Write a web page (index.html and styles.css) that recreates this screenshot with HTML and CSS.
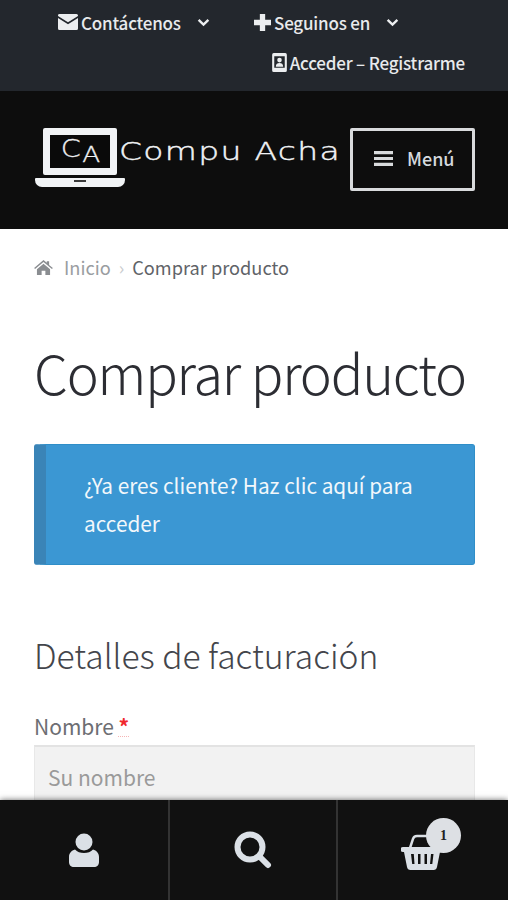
FILE: index.html
```html
<!DOCTYPE html>
<html lang="es">

<head>
  <meta charset="utf-8">
  <title>Comprar producto</title>
  <link rel="stylesheet" href="styles.css">
</head>

<body>
  <div class="topbar">
    <div class="topbar-row">
      <a class="top-link top-contact">
        <svg class="top-icon" viewBox="0 0 20 16"><path d="M1.500 0h17A1.500 1.500 0 0 1 20 1.500v.6l-10 6.200-10-6.200v-.6A1.500 1.500 0 0 1 1.500 0zM0 4l10 6.200L20 4v10.500a1.500 1.500 0 0 1-1.500 1.500h-17A1.500 1.500 0 0 1 0 14.500z"/></svg>
        Contáctenos
        <svg class="chev" viewBox="0 0 12 8"><path d="M1.500 1.500L6 6l4.500-4.500" /></svg>
      </a>
      <a class="top-link top-follow">
        <svg class="top-icon plus" viewBox="0 0 16 16"><path d="M5.500 0h5v5.500H16v5h-5.500V16h-5v-5.500H0v-5h5.500z"/></svg>
        Seguinos en
        <svg class="chev" viewBox="0 0 12 8"><path d="M1.500 1.500L6 6l4.500-4.500" /></svg>
      </a>
    </div>
    <div class="topbar-row topbar-right">
      <a class="top-link">
        <svg class="top-icon badge" viewBox="0 0 14 20"><path fill-rule="evenodd" d="M1.500 1h11A1.500 1.500 0 0 1 14 2.500v15a1.500 1.500 0 0 1-1.500 1.500h-11A1.500 1.500 0 0 1 0 17.500v-15A1.500 1.500 0 0 1 1.500 1zM2 4v11h10V4zM7 5.500a2.200 2.200 0 1 1 0 4.400 2.200 2.200 0 0 1 0-4.400zM3.500 14c0-2.500 1.500-3.500 3.500-3.500s3.500 1 3.500 3.500z"/></svg>
        Acceder – Registrarme
      </a>
    </div>
  </div>

  <header class="site-header">
    <div class="logo">
      <div class="laptop">
        <div class="laptop-screen"><span class="laptop-c">C</span><span class="laptop-a">A</span></div>
        <div class="laptop-base"><span class="laptop-notch"></span></div>
      </div>
      <span class="logo-text">Compu Acha</span>
    </div>
    <button class="menu-btn">
      <svg class="menu-icon" viewBox="0 0 18 14"><path d="M0 0h18v3H0zM0 5.500h18v3H0zM0 11h18v3H0z"/></svg>
      Menú
    </button>
  </header>

  <main class="content">
    <nav class="breadcrumb">
      <svg class="home-icon" viewBox="0 0 20 16"><path d="M10 0l3.500 3V1.200h2.500v4L20 8.500l-1 1.200L10 2.200 1 9.700 0 8.500zM10 4l7 5.800V16h-5v-4.500H8V16H3V9.800z"/></svg>
      <a class="crumb-link">Inicio</a>
      <span class="crumb-sep">›</span>
      <span>Comprar producto</span>
    </nav>

    <h1 class="page-title">Comprar producto</h1>

    <div class="notice">¿Ya eres cliente? Haz clic aquí para acceder</div>

    <h3 class="section-title">Detalles de facturación</h3>

    <label class="field-label">Nombre <abbr class="required">*</abbr></label>
    <input class="field-input" type="text" placeholder="Su nombre">
  </main>

  <footer class="bottom-bar">
    <a class="bottom-item">
      <svg class="user-icon" viewBox="0 0 30 34"><circle cx="15" cy="9" r="8.500"/><path d="M6 16.500c2 2.500 5.500 3.500 9 3.500s7-1 9-3.500c3.500 1 6 3.500 6 7.500v5c0 3-2 5-5 5H5c-3 0-5-2-5-5v-5c0-4 2.500-6.500 6-7.500z"/></svg>
    </a>
    <a class="bottom-item">
      <svg class="search-icon" viewBox="0 0 38 38"><circle cx="16" cy="16" r="12.500"/><path d="M25.500 25.500L34 34"/></svg>
    </a>
    <a class="bottom-item">
      <svg class="cart-icon" viewBox="0 0 42 38"><path class="cart-handle" d="M9 15l3-9c.5-2 2-3 4-3h10"/><path fill-rule="evenodd" d="M2 14h38a2 2 0 0 1 0 5h-1l-3 15c-.4 2-1.500 3-3.500 3h-23c-2 0-3.100-1-3.500-3L3 19H2a2 2 0 0 1 0-5zM10 21l1.200 10h2.300L12.800 21zM17 21v10h2.500V21zM23.500 21v10H26V21zM30 21l-1 10h2.300l1.200-10z"/></svg>
      <span class="cart-count">1</span>
    </a>
  </footer>
</body>

</html>
```

FILE: styles.css
```css
html, body {
  height: 100%;
}

body {
  margin: 0;
  height: 900px;
  overflow: hidden;
  font-family: "Noto Sans CJK JP", "Noto Sans", sans-serif;
  background: #fff;
  color: #43454b;
}

/* top bar */
.topbar {
  height: 91px;
  box-sizing: border-box;
  background: #23272d;
  padding-top: 2px;
  color: #e8eaec;
  font-size: 17px;
  font-weight: 500;
  letter-spacing: -0.2px;
}

.topbar-row {
  display: flex;
  height: 40px;
  align-items: center;
  padding-left: 58px;
}

.topbar-right {
  justify-content: flex-end;
  padding-right: 43px;
}

.top-link {
  display: flex;
  align-items: center;
  gap: 3px;
  white-space: nowrap;
}

.top-contact {
  width: 196px;
}

.top-icon {
  fill: #eceef0;
}

.top-contact .top-icon {
  width: 20px;
  height: 16px;
}

.plus {
  width: 17px;
  height: 17px;
}

.badge {
  width: 15px;
  height: 21px;
}

.chev {
  width: 13px;
  height: 9px;
  margin-left: 13px;
  fill: none;
  stroke: #eceef0;
  stroke-width: 2.200;
}

/* header */
.site-header {
  height: 138px;
  box-sizing: border-box;
  background: #0d0d0d;
  display: flex;
  align-items: center;
  justify-content: space-between;
  padding: 0 33px 0 34px;
}

.logo {
  display: flex;
  align-items: center;
  margin-top: -6px;
}

.laptop {
  width: 92px;
  display: flex;
  flex-direction: column;
  align-items: center;
}

.laptop-screen {
  width: 60px;
  height: 33px;
  border: 7px solid #f1f3f5;
  border-radius: 2px;
  background: #0a0a0a;
  display: flex;
  align-items: center;
  justify-content: center;
  color: #eef0f2;
  font-family: "DejaVu Sans", sans-serif;
  font-weight: 200;
  line-height: 1;
  overflow: hidden;
}

.laptop-c {
  font-size: 25px;
  margin-top: -5px;
  transform: scaleX(1.15);
  -webkit-text-stroke: 0.3px #eef0f2;
}

.laptop-a {
  margin: 9px 0 0 5px;
  font-size: 21px;
  transform: scaleX(1.25);
  -webkit-text-stroke: 0.3px #eef0f2;
}

.laptop-base {
  position: relative;
  width: 90px;
  height: 9px;
  margin-top: 3px;
  background: #f1f3f5;
  border-radius: 1px 1px 7px 7px;
}

.laptop-notch {
  position: absolute;
  top: 2px;
  left: 39px;
  width: 12px;
  height: 2px;
  background: #3a3a3a;
}

.logo-text {
  margin: -10px 0 0 -7px;
  color: #f1f3f5;
  font-family: "DejaVu Sans", sans-serif;
  font-size: 24px;
  font-weight: 200;
  letter-spacing: 1px;
  white-space: nowrap;
  -webkit-text-stroke: 0.4px #f1f3f5;
  transform: scaleX(1.37);
  transform-origin: left center;
}

.menu-btn {
  display: flex;
  align-items: center;
  gap: 14px;
  width: 125px;
  height: 63px;
  box-sizing: border-box;
  margin-top: -1px;
  padding: 0 0 3px 21px;
  background: transparent;
  border: 3px solid #d8dadc;
  border-radius: 2px;
  color: #d5d9de;
  font-family: inherit;
  font-size: 18px;
  font-weight: 500;
}

.menu-icon {
  width: 19px;
  height: 15px;
  fill: #d8dadc;
}

/* content */
.content {
  padding: 0 33px 0 34px;
}

.breadcrumb {
  display: flex;
  align-items: center;
  height: 28px;
  margin-top: 24px;
  font-size: 18.200px;
  color: #5f6368;
}

.home-icon {
  width: 19px;
  height: 15px;
  fill: #8a8d91;
  margin-right: 11px;
}

.crumb-link {
  color: #9a9da1;
}

.crumb-sep {
  margin: 0 8px;
  color: #c9cbcd;
}

.page-title {
  margin: 54px 0 0;
  font-size: 54px;
  font-weight: 300;
  line-height: 74px;
  letter-spacing: -1.200px;
  color: #2c2d33;
  white-space: nowrap;
}

.notice {
  margin-top: 35px;
  box-sizing: border-box;
  height: 121px;
  padding: 21px 40px 0 38px;
  background: #3b97d3;
  border: 1px solid #2f8ec8;
  border-left: 12px solid #3a84b7;
  border-radius: 3px;
  color: #f2f7fb;
  font-size: 20.800px;
  font-weight: 400;
  line-height: 38px;
}

.section-title {
  margin: 65px 0 0;
  font-size: 33.600px;
  font-weight: 300;
  line-height: 50px;
  color: #43454b;
}

.field-label {
  display: block;
  margin-top: 32px;
  font-size: 21px;
  line-height: 28px;
  color: #6d6e73;
}

.required {
  color: #f0282d;
  font-weight: 700;
  text-decoration: underline dotted;
  text-decoration-color: #f5b5b5;
  text-decoration-thickness: 1px;
}

.field-input {
  display: block;
  width: 100%;
  height: 70px;
  box-sizing: border-box;
  margin-top: 5px;
  padding: 0 13px 8px 13px;
  background: #f2f2f2;
  border: 0;
  border-top: 2px solid #e3e3e3;
  border-left: 1px solid #e8e8e8;
  border-right: 1px solid #e8e8e8;
  font-family: inherit;
  font-size: 21px;
  line-height: 28px;
}

.field-input::placeholder {
  color: #9a9a9a;
  opacity: 1;
}

/* bottom bar */
.bottom-bar {
  position: fixed;
  left: 0;
  right: 0;
  bottom: 0;
  height: 100px;
  background: #111;
  display: grid;
  grid-template-columns: 170px 168px 170px;
  box-shadow: 0 0 6px rgba(0, 0, 0, 0.6);
}

.bottom-item {
  position: relative;
  display: flex;
  align-items: center;
  justify-content: center;
  padding-bottom: 1px;
  border-right: 2px solid #333;
}

.bottom-item:last-child {
  border-right: 0;
}

.user-icon {
  width: 30px;
  height: 34px;
  fill: #dbe0e6;
}

.search-icon {
  width: 38px;
  height: 38px;
  fill: none;
  stroke: #dbe0e6;
  stroke-width: 6;
  stroke-linecap: round;
}

.cart-icon {
  width: 42px;
  height: 38px;
  margin: 4px 2px 0 0;
  fill: #dbe0e6;
}

.cart-handle {
  fill: none;
  stroke: #dbe0e6;
  stroke-width: 2.500;
}

.cart-count {
  position: absolute;
  top: 18px;
  left: 88px;
  width: 35px;
  height: 35px;
  border-radius: 50%;
  background: #dde0e4;
  color: #222;
  font-family: "Liberation Serif", serif;
  font-size: 14px;
  font-weight: 700;
  line-height: 35px;
  text-align: center;
}
```
